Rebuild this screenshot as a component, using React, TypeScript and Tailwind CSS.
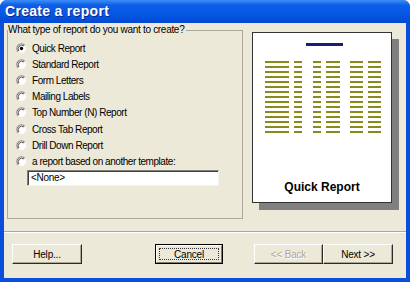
import React from "react";

const options = [
  "Quick Report",
  "Standard Report",
  "Form Letters",
  "Mailing Labels",
  "Top Number (N) Report",
  "Cross Tab Report",
  "Drill Down Report",
  "a report based on another template:",
];

// column widths and left gaps of the olive "data" lines in the preview page
const columns = [
  { w: "w-[24px]", ml: "ml-0" },
  { w: "w-[8px]", ml: "ml-[5px]" },
  { w: "w-[8px]", ml: "ml-[11px]" },
  { w: "w-[14px]", ml: "ml-[5px]" },
  { w: "w-[13px]", ml: "ml-[10px]" },
  { w: "w-[13px]", ml: "ml-[5px]" },
];

const Radio = ({ checked }: { checked?: boolean }) => (
  <svg width="11" height="11" viewBox="0 0 12 12" className="shrink-0">
    <circle cx="6" cy="6" r="5" fill="#fff" />
    <path d="M9.54 2.46 A5 5 0 0 0 2.46 9.54" fill="none" stroke="#8a8a8a" strokeWidth="1.4" />
    <path d="M8.8 3.2 A4 4 0 0 0 3.2 8.8" fill="none" stroke="#404040" strokeWidth="1" />
    <path d="M9.54 2.46 A5 5 0 0 1 2.46 9.54" fill="none" stroke="#f4f2ea" strokeWidth="1" />
    {checked && <circle cx="6" cy="6" r="1.8" fill="#000" />}
  </svg>
);

const Button = ({
  children,
  className = "",
  isDefault,
  disabled,
}: {
  children: React.ReactNode;
  className?: string;
  isDefault?: boolean;
  disabled?: boolean;
}) => {
  if (isDefault) {
    return (
      <div className={`h-[20px] border border-black bg-[#ece9d8] ${className}`}>
        <div className="h-full border border-t-white border-l-white border-r-[#7f7d72] border-b-[#7f7d72] p-[2px]">
          <div className="h-full border border-dotted border-[#333] flex items-center justify-center text-[10px] tracking-[-0.2px]">
            {children}
          </div>
        </div>
      </div>
    );
  }
  return (
    <div
      className={`h-[20px] flex items-center justify-center bg-[#ece9d8] border border-t-white border-l-white border-r-[#2b2b2b] border-b-[#2b2b2b] shadow-[inset_-1px_-1px_0_#aca899] text-[10px] tracking-[-0.2px] ${
        disabled ? "text-[#aca899] [text-shadow:1px_1px_0_#fff]" : "text-black"
      } ${className}`}
    >
      {children}
    </div>
  );
};

export default function App() {
  return (
    <div className="w-[410px] h-[282px] flex flex-col bg-[#0a4fdc] rounded-t-[7px] overflow-hidden font-['Liberation_Sans',Arial,sans-serif] text-black">
      {/* title bar */}
      <div className="h-[23px] shrink-0 flex items-center pl-[5px] bg-[linear-gradient(180deg,#3d8ef7_0%,#0d5fe8_22%,#0558e4_60%,#0349d3_100%)]">
        <span className="text-white font-bold text-[14px] tracking-[0.3px] [text-shadow:1px_1px_0_#0a2a8a]">
          Create a report
        </span>
      </div>

      {/* client area */}
      <div className="flex-1 mx-[4px] mb-[4px] bg-[#ece9d8] flex flex-col">
        <div className="h-[208px] shrink-0 flex items-start">
          <fieldset className="ml-[3px] mt-[1px] w-[236px] h-[195px] border border-[#aca899]">
            <legend className="pr-[2px] text-[10px] leading-[12px] tracking-[-0.3px]">
              What type of report do you want to create?
            </legend>
            <div className="pt-[4px] pl-[8px] flex flex-col">
              {options.map((label, i) => (
                <div key={label} className="h-[16.2px] flex items-center gap-[5px]">
                  <Radio checked={i === 0} />
                  <span className="text-[10px] tracking-[-0.45px] whitespace-nowrap">{label}</span>
                </div>
              ))}
              <div className="ml-[11px] w-[192px] h-[16px] bg-white border border-t-[#7f7f7f] border-l-[#7f7f7f] border-b-[#f4f2ea] border-r-[#f4f2ea] shadow-[inset_1px_1px_0_#404040] flex items-center pl-[3px] text-[10px] tracking-[-0.3px]">
                &lt;None&gt;
              </div>
            </div>
          </fieldset>

          {/* preview page */}
          <div className="ml-[9px] mt-[9px] w-[140px] h-[171px] bg-white border border-[#333] shadow-[7px_7px_0_#808080] flex flex-col">
            <div className="mt-[10px] ml-[53px] w-[37px] h-[3px] bg-[#1c1c74]" />
            <div className="mt-[15px] ml-[12px] flex">
              {columns.map((c, ci) => (
                <div key={ci} className={`${c.w} ${c.ml} flex flex-col gap-[3px]`}>
                  {Array.from({ length: 15 }).map((_, ri) => (
                    <div key={ri} className="h-[2px] bg-[#8a8a1c]" />
                  ))}
                </div>
              ))}
            </div>
            <div className="mt-auto mb-[8px] text-center font-bold text-[12px] leading-[14px]">
              Quick Report
            </div>
          </div>
        </div>

        {/* separator */}
        <div className="h-[2px] shrink-0 border-t border-[#aca899] border-b border-b-white" />

        {/* buttons */}
        <div className="pt-[11px] flex items-start">
          <Button className="ml-[8px] w-[70px]">Help...</Button>
          <Button isDefault className="ml-[73px] w-[68px]">
            Cancel
          </Button>
          <Button disabled className="ml-[31px] w-[69px]">
            &lt;&lt; Back
          </Button>
          <Button className="w-[70px]">Next &gt;&gt;</Button>
        </div>
      </div>
    </div>
  );
}
